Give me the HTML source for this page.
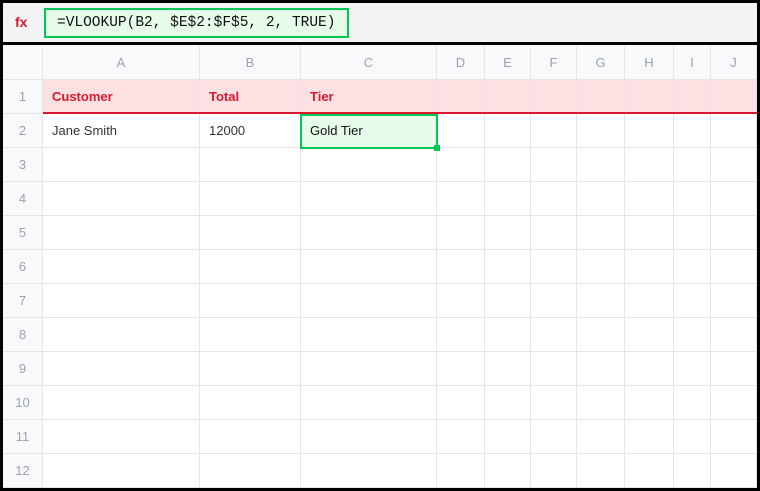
<!DOCTYPE html>
<html><head><style>
*{margin:0;padding:0;box-sizing:border-box}
body{width:760px;height:491px;background:#000;position:relative;overflow:hidden;font-family:"Liberation Sans",Arial,sans-serif}
.fb{position:absolute;left:3px;top:3px;width:754px;height:39px;background:#f3f3f3}
.fx{position:absolute;left:15px;top:14px;color:#d9192e;font-weight:bold;font-size:14px}
.fbox{position:absolute;left:44px;top:8px;width:305px;height:30px;border:2px solid #00c853;background:#e6fbea;font-family:"Liberation Mono",monospace;font-size:14.5px;line-height:26px;padding-left:11px;color:#111}
.grid{position:absolute;left:3px;top:45px;width:754px;height:443px;background:#fff;overflow:hidden}
.c{position:absolute;border-right:1px solid #e3e5e8;border-bottom:1px solid #e3e5e8;font-size:13px;display:flex;align-items:center}
.h{background:#f8f9fb;color:#9ca1ab;justify-content:center}
</style></head><body>
<div class="fb"></div>
<div class="fx">fx</div>
<div class="fbox">=VLOOKUP(B2, $E$2:$F$5, 2, TRUE)</div>
<div class="grid" id="g"></div>
<script>
var xs=[0,40,197,298,434,482,528,574,622,671,708,754];
var L=['','A','B','C','D','E','F','G','H','I','J'];
var g=document.getElementById('g'),h='';
for(var r=0;r<13;r++){var y=r==0?0:35+(r-1)*34;var hh=r==0?35:34;
for(var c=0;c<11;c++){var x=xs[c],w=xs[c+1]-x;
var cls='c',st='left:'+x+'px;top:'+y+'px;width:'+w+'px;height:'+hh+'px;',t='';
if(r==0){cls+=' h';t=L[c];}
else if(c==0){cls+=' h';t=r;}
else{ if(r==1){st+='background:#fde1e2;color:#d9192e;font-weight:bold;padding-left:9px;';if(c==1)t='Customer';if(c==2)t='Total';if(c==3)t='Tier';}
 else if(r==2){st+='color:#333;padding-left:9px;';if(c==1)t='Jane Smith';if(c==2)t='12000';if(c==3){t='Gold Tier';st+='background:#e6fbea;color:#111;';}}}
h+='<div class="'+cls+'" style="'+st+'">'+t+'</div>';}}
h+='<div style="position:absolute;left:40px;top:67px;width:714px;height:2px;background:#d9192e"></div>';
h+='<div style="position:absolute;left:297px;top:69px;width:138px;height:35px;border:2px solid #00c853"></div>';
h+='<div style="position:absolute;left:431px;top:100px;width:6px;height:6px;background:#00c853"></div>';
g.innerHTML=h;
</script>
</body></html>
